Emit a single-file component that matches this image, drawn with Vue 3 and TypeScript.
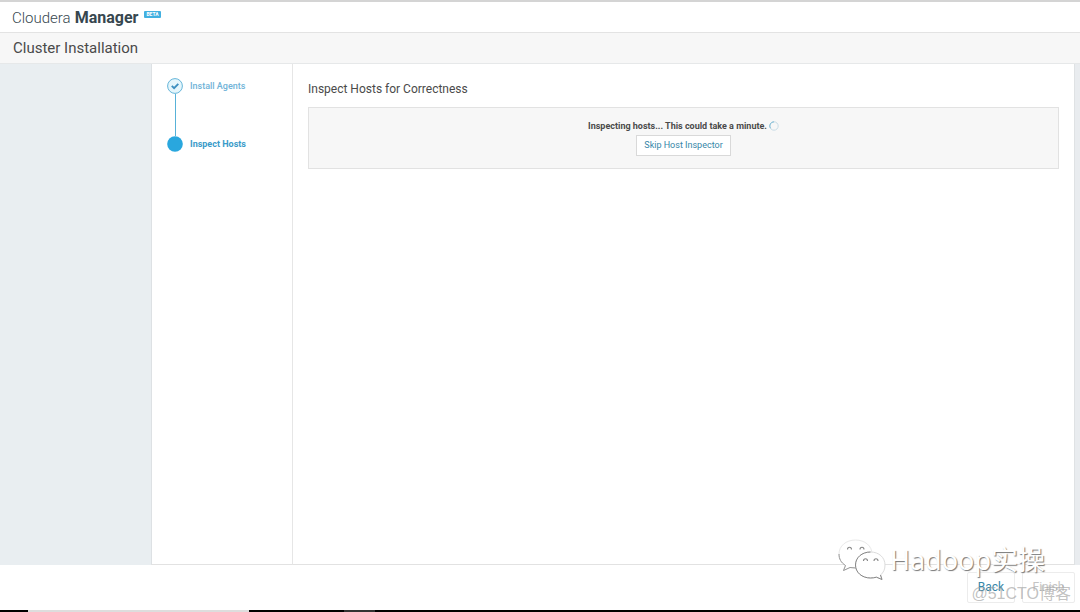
<script setup lang="ts">
interface Step {
  label: string
  done: boolean
}

const steps: Step[] = [
  { label: 'Install Agents', done: true },
  { label: 'Inspect Hosts', done: false },
]
</script>

<template>
  <div class="page">
    <header class="brand">
      <span class="brand-name"><span>Cloudera</span> <b>Manager</b></span>
      <span class="beta">BETA</span>
    </header>
    <div class="title-bar"><h1>Cluster Installation</h1></div>

    <div class="body">
      <aside class="gutter"></aside>
      <nav class="steps" aria-label="Installation steps">
        <ol>
          <li v-for="step in steps" :key="step.label" :class="{ done: step.done }">
            <svg class="dot" viewBox="0 0 16 16" aria-hidden="true">
              <template v-if="step.done">
                <circle cx="8" cy="8" r="7.4" fill="#e4f6fc" stroke="#66b5d9" stroke-width="1" />
                <path d="M4.8 7.8 7.1 10.1 11.3 5.8" fill="none" stroke="#3c8fc0" stroke-width="1.9" />
              </template>
              <circle v-else cx="8" cy="8" r="7.8" fill="#29a7de" />
            </svg>
            <a href="#">{{ step.label }}</a>
          </li>
        </ol>
      </nav>
      <main class="content">
        <h2>Inspect Hosts for Correctness</h2>
        <section class="panel">
          <p class="status" role="status">
            Inspecting hosts... This could take a minute.
            <svg class="spinner" viewBox="0 0 10 10" aria-hidden="true">
              <circle cx="5" cy="5" r="4.2" fill="none" stroke="#c9dce6" stroke-width="1" />
              <path d="M5 .8A4.2 4.2 0 0 0 1.4 7.2" fill="none" stroke="#7dbbd6" stroke-width="1" />
            </svg>
          </p>
          <button type="button" class="btn skip">Skip Host Inspector</button>
        </section>
      </main>
      <div class="scroll-edge"></div>
    </div>

    <footer class="actions">
      <button type="button" class="btn back">Back</button>
      <button type="button" class="btn finish" disabled>Finish</button>
    </footer>
    <div class="taskbar"><span class="tab"></span><span class="tab-dim"></span></div>

    <div class="mark">
      <svg class="mark-icon" viewBox="0 0 48 42" aria-hidden="true">
        <g fill="#fff" stroke-linejoin="round">
          <path d="M17.500 1C8 1 1 7 1 15c0 5 2 8.500 6.500 11.500L5.500 31.500l6.500-3c2 .5 4 .5 6 .5C27.500 29 34 23 34 15S27 1 17.500 1Z" stroke="#e9e9e9" />
          <path d="M1 15c0 5 2 8.500 6.500 11.500L5.500 31.500l6.500-3 6 .5" fill="none" stroke="#999" />
          <path d="M32.500 13C24 13 17.500 18.500 17.500 26S24 39 32.500 39c2 0 4-.3 6-.8l5.500 2.300-1.500-4.500c3-2.500 4.500-5.500 4.500-10C47 18.500 41 13 32.500 13Z" stroke="#dcdcdc" />
          <path d="M32.500 13C24 13 17.500 18.500 17.500 26S24 39 32.500 39c2 0 4-.3 6-.8l5.500 2.300-1.500-4.500" fill="none" stroke="#888" />
        </g>
        <g fill="none" stroke="#888" stroke-width="1.100">
          <path d="M9.500 10.500c0-3 4-3 4 0M22 10.500c0-3 4-3 4 0M25.500 22c0-3 4-3 4 0M36 22c0-3 4-3 4 0" />
        </g>
      </svg>
      <span class="mark-text">Hadoop实操</span>
    </div>
    <span class="credit">@51CTO博客</span>
  </div>
</template>

<style>
body {
  margin: 0;
}
</style>

<style scoped>
.page {
  position: relative;
  display: flex;
  flex-direction: column;
  min-height: 100vh;
  box-sizing: border-box;
  overflow: hidden;
  border-top: 2px solid #d4d4d4;
  background: #fff;
  color: #4a4a4a;
  font-family: Roboto, "Noto Sans CJK SC", sans-serif;
  font-size: 9px;
}
h1,
h2,
p,
ol {
  margin: 0;
  padding: 0;
  font-weight: 400;
}
.brand {
  display: flex;
  align-items: center;
  height: 30px;
  padding: 0 12px;
  border-bottom: 1px solid #e3e3e3;
}
.brand-name {
  display: flex;
  align-items: baseline;
  gap: 4px;
  padding-top: 1px;
  font-size: 15px;
  line-height: 20px;
  font-weight: 300;
  color: #37474f;
}
.brand-name b {
  font-size: 16px;
  font-weight: 700;
}
.beta {
  margin: 0 0 6px 6px;
  padding: 0 2px;
  border-radius: 1px;
  background: #42b0e0;
  color: #fff;
  font-size: 5px;
  line-height: 7px;
  font-weight: 700;
}
.title-bar {
  display: flex;
  align-items: center;
  height: 30px;
  padding: 0 13px;
  border-bottom: 1px solid #e6e8e9;
  background: #f7f7f7;
}
h1 {
  font-size: 15px;
  line-height: 20px;
}
.body {
  flex: 1;
  display: grid;
  grid-template-columns: 151px 142px 1fr 6px;
}
.gutter {
  background: #e9eef1;
}
.steps {
  padding: 14px 15px 0;
  border-left: 1px solid #dde1e4;
  border-right: 1px solid #e6e6e6;
  border-bottom: 1px solid #e2e2e2;
}
.steps ol {
  list-style: none;
}
.steps li {
  position: relative;
  display: flex;
  align-items: center;
  gap: 7px;
  height: 16px;
  margin-bottom: 42px;
}
.steps li:not(:last-child)::after {
  content: "";
  position: absolute;
  top: 16px;
  left: 8px;
  width: 1px;
  height: 42px;
  background: #58b2d8;
}
.dot {
  width: 16px;
  height: 16px;
}
.steps a {
  color: #3a9bc9;
  font-weight: 700;
  text-decoration: none;
}
.steps .done a {
  color: #70b3d8;
  font-weight: 500;
}
.content {
  padding: 15px 15px 0;
  border-bottom: 1px solid #e2e2e2;
}
h2 {
  font-size: 12px;
  line-height: 20px;
}
.panel {
  display: flex;
  flex-direction: column;
  align-items: center;
  gap: 3px;
  margin-top: 8px;
  padding: 12px 0;
  border: 1px solid #e2e2e2;
  background: #f7f7f7;
}
.status {
  display: flex;
  align-items: center;
  gap: 2px;
  line-height: 12px;
  font-weight: 700;
}
.spinner {
  width: 10px;
  height: 10px;
}
.btn {
  box-sizing: border-box;
  border: 1px solid #d9d9d9;
  background: #fff;
  color: #3686a8;
  font-family: inherit;
}
.skip {
  height: 21px;
  padding: 0 7px 2px;
  font-size: 9px;
}
.scroll-edge {
  border-left: 1px solid #dfe2e4;
  background: #e9ecef;
}
.actions {
  display: flex;
  justify-content: flex-end;
  gap: 7px;
  padding: 7px 5px 7px;
}
.actions .btn {
  height: 31px;
  padding: 0 0 2px;
  border-color: #ececec;
  border-radius: 2px;
  font-size: 12px;
}
.back {
  width: 48px;
}
.actions .finish {
  width: 53px;
  color: #c4c4c4;
}
.taskbar {
  display: flex;
  height: 2px;
  background: #000;
}
.tab {
  width: 221px;
  margin-left: 28px;
  background: #ddd;
}
.tab-dim {
  width: 31px;
  margin-left: 95px;
  background: #333;
}
.mark {
  position: absolute;
  right: 35px;
  bottom: 31px;
  display: flex;
  align-items: center;
  gap: 4px;
}
.mark-icon {
  width: 48px;
  height: 42px;
}
.mark-text {
  color: #fff;
  font-family: "Noto Sans", "Noto Sans CJK SC", sans-serif;
  font-size: 27px;
  line-height: 40px;
  text-shadow: 1px 1px 1px #777;
}
.credit {
  position: absolute;
  right: 9px;
  bottom: 8px;
  color: rgba(160, 160, 160, 0.65);
  font-family: "Liberation Sans", "Noto Sans CJK SC", sans-serif;
  font-size: 16px;
  line-height: 20px;
}
</style>
